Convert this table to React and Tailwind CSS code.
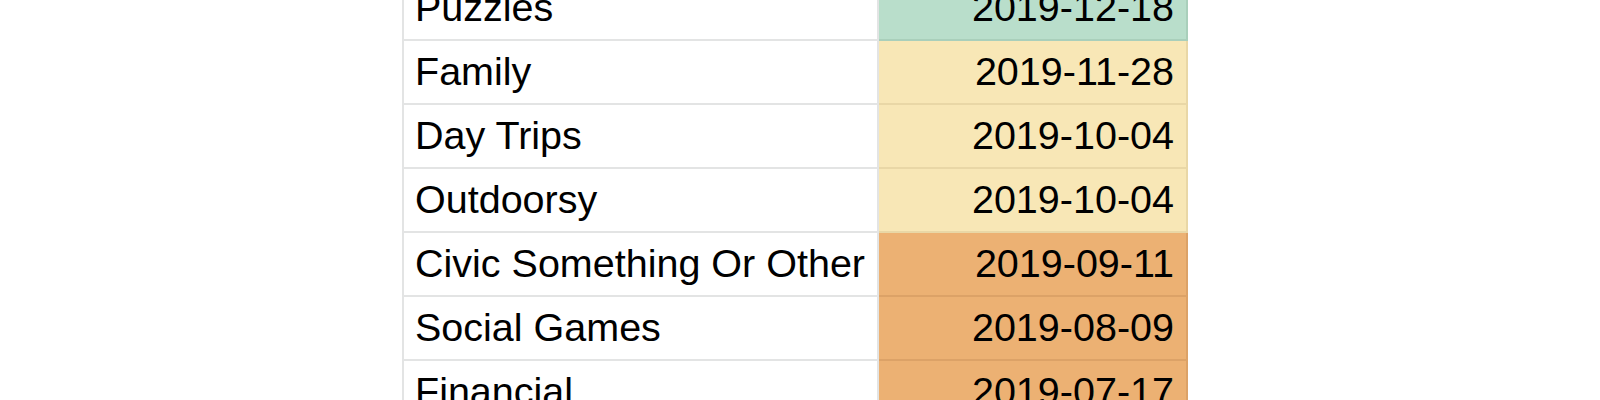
import React from 'react';

const rows = [
  { name: 'Puzzles', date: '2019-12-18', tone: 'green' },
  { name: 'Family', date: '2019-11-28', tone: 'yellow' },
  { name: 'Day Trips', date: '2019-10-04', tone: 'yellow' },
  { name: 'Outdoorsy', date: '2019-10-04', tone: 'yellow' },
  { name: 'Civic Something Or Other', date: '2019-09-11', tone: 'orange' },
  { name: 'Social Games', date: '2019-08-09', tone: 'orange' },
  { name: 'Financial', date: '2019-07-17', tone: 'orange' },
];

// full class strings so tailwind picks them up
const toneClass = {
  green: 'bg-[#b9decb] border-[#a9cfbb]',
  yellow: 'bg-[#f8e7b6] border-[#e9d7a6]',
  orange: 'bg-[#ecb173] border-[#dca267]',
};

export default function App() {
  return (
    <div className="min-h-screen bg-white overflow-hidden" style={{ fontFamily: '"Liberation Sans", Arial, sans-serif' }}>
      <div className="-mt-[23px] ml-[402px] w-[786px] border-l-2 border-[#e3e4e4]">
        {rows.map((row) => (
          <div key={row.name} className="flex h-[64px]">
            <div className="w-[475px] flex items-center pl-[11px] border-r-2 border-b-2 border-[#e3e4e4] text-[39.5px] text-black leading-none">
              {row.name}
            </div>
            <div className={`flex-1 flex items-center justify-end pr-[12px] border-b-2 border-r-2 text-[39.5px] text-black leading-none ${toneClass[row.tone]}`}>
              {row.date}
            </div>
          </div>
        ))}
      </div>
    </div>
  );
}
